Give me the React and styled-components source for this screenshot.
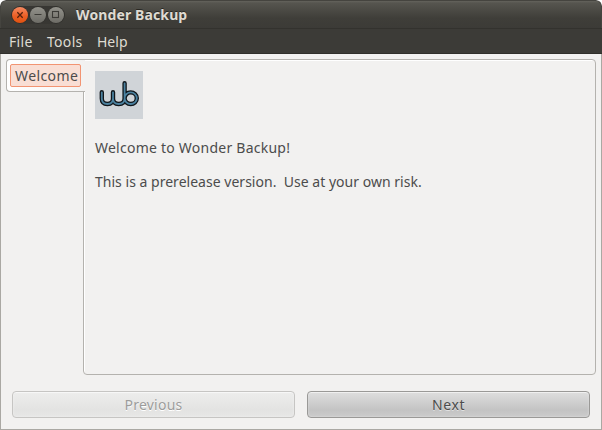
import React from "react";
import styled, { createGlobalStyle } from "styled-components";

const Global = createGlobalStyle`
  * { box-sizing: border-box; }
  body { margin: 0; background: #fff; }
`;

const Window = styled.div`
  width: 602px;
  height: 430px;
  display: flex;
  flex-direction: column;
  overflow: hidden;
  border-radius: 6px 6px 0 0;
  background: #f2f1f0;
  font-family: "Noto Sans", "Open Sans", sans-serif;
  font-size: 14px;
  color: #4c4c4c;
`;

const TitleBar = styled.header`
  height: 28px;
  flex: none;
  display: flex;
  align-items: center;
  padding: 0 0 0 10px;
  border: 1px solid #45443f;
  border-bottom: 0;
  border-radius: 6px 6px 0 0;
  background: linear-gradient(#64635c 0, #56554f 2px, #3f3e39 17px, #3c3b37 100%);
`;

const Controls = styled.div`
  display: flex;
  gap: 2px;
  padding: 1px;
  border-radius: 10px;
  background: #383733;
`;

const Control = styled.span`
  width: 16px;
  height: 16px;
  display: flex;
  border-radius: 50%;
  box-shadow: 0 0 0 0.5px #2b2a27;
  background: ${(p) => (p.$close ? "linear-gradient(#f58a62, #ec6027 55%, #e05210)" : "linear-gradient(#93928b, #6d6c66)")};
  svg { display: block; width: 16px; height: 16px; fill: none; stroke: ${(p) => (p.$close ? "#55200d" : "#3c3b37")}; }
`;

const Title = styled.h1`
  margin: 0 0 0 11px;
  font-size: 14px;
  line-height: 20px;
  font-weight: 700;
  letter-spacing: ${(p) => p.$spacing}px;
  color: #dfdbd2;
  text-shadow: 0 -1px 0 #292824;
`;

const MenuBar = styled.nav`
  height: 26px;
  flex: none;
  display: flex;
  padding-left: 9px;
  border-top: 1px solid #33322e;
  border-bottom: 1px solid #302f2b;
  background: #3c3b37;
  color: #dfdbd2;
  line-height: 25px;
`;

const MenuItem = styled.span`
  width: ${(p) => p.$width}px;
  letter-spacing: ${(p) => p.$spacing}px;
`;

const Body = styled.div`
  flex: 1;
  display: flex;
  flex-direction: column;
  padding: 5px 5px 10px;
  border: solid #aaa8a3;
  border-width: 0 1px 1px;
`;

const Notebook = styled.div`
  height: 316px;
  display: flex;
`;

const Tab = styled.div`
  position: relative;
  z-index: 1;
  width: 79px;
  height: 33px;
  flex: none;
  padding: 4px 3px;
  border: 1px solid #b4b2ae;
  border-right: 0;
  border-radius: 4px 0 0 4px;
  background: linear-gradient(90deg, #fff, #f8f7f6 75%, #f2f1f0);
`;

const TabFocus = styled.div`
  width: 71px;
  height: 23px;
  padding-left: 4px;
  border: 1px solid #f29472;
  border-radius: 2px;
  background: #f9ded4;
  line-height: 22px;
  white-space: nowrap;
  letter-spacing: ${(p) => p.$spacing}px;
`;

const Page = styled.main`
  width: 513px;
  margin-left: -2px;
  padding: 11px;
  border: 1px solid #b4b2ae;
  border-radius: 0 4px 4px 4px;
  box-shadow: inset 1px 1px 0 #fff;
`;

const Logo = styled.svg`
  display: block;
  width: 48px;
  height: 48px;
  background: #d0d4d8;
`;

const Message = styled.p`
  margin: ${(p) => p.$top}px 0 0;
  line-height: 20px;
  white-space: pre;
  letter-spacing: ${(p) => p.$spacing}px;
`;

const Actions = styled.footer`
  display: flex;
  gap: 12px;
  margin: 16px 6px 0 6px;
`;

const Button = styled.button`
  flex: 1;
  height: 27px;
  padding: 0;
  font: inherit;
  line-height: 25px;
  letter-spacing: ${(p) => p.$spacing}px;
  color: #4c4c4c;
  text-shadow: 0 1px 0 #e2e2e2;
  border: 1px solid #9a9997;
  border-radius: 4px;
  background: linear-gradient(#dedede, #c3c3c3 72%, #cbcbcb);
  box-shadow: inset 0 1px 0 #f0f0f0, inset 0 0 2px #e4e4e4;
  &:disabled {
    color: #9c9c9b;
    text-shadow: 0 1px 0 #fff;
    border-color: #c6c5c3;
    background: linear-gradient(#ededec, #e3e3e2 72%, #e7e7e6);
    box-shadow: inset 0 1px 0 #f7f7f7, inset 0 0 2px #f2f2f2;
  }
`;

const LETTERS = "M6.8 21.3V27.6Q6.8 33 12.4 33Q18 33 18 27.6V21.3M18 27.6Q18 33 23.7 33Q29.6 33 29.6 27.6V12.3M29.6 27.2A6.1 5.8 0 1 1 41.8 27.2A6.1 5.8 0 1 1 29.6 27.2";

export default function App() {
  return (
    <Window>
      <Global />
      <TitleBar>
        <Controls>
          <Control $close><svg viewBox="0 0 16 16"><path d="M5.3 5.3l5.4 5.4M10.7 5.3l-5.4 5.4" strokeWidth="1.3" /></svg></Control>
          <Control><svg viewBox="0 0 16 16"><path d="M4.5 7.5h7" /></svg></Control>
          <Control><svg viewBox="0 0 16 16"><rect x="4.5" y="4.5" width="6" height="6" strokeWidth="1.1" /></svg></Control>
        </Controls>
        <Title $spacing={0.12}>Wonder Backup</Title>
      </TitleBar>
      <MenuBar>
        <MenuItem $width={38} $spacing={0.3}>File</MenuItem>
        <MenuItem $width={50} $spacing={0.3}>Tools</MenuItem>
        <MenuItem $width={40} $spacing={0}>Help</MenuItem>
      </MenuBar>
      <Body>
        <Notebook>
          <Tab><TabFocus $spacing={0.4}>Welcome</TabFocus></Tab>
          <Page>
            <Logo viewBox="0 0 48 48" fill="none" strokeLinecap="round" strokeLinejoin="round">
              <path d={LETTERS} stroke="#10161b" strokeWidth="4.4" />
              <path d={LETTERS} stroke="#4b819f" strokeWidth="1.8" />
            </Logo>
            <Message $top={19} $spacing={0.24}>Welcome to Wonder Backup!</Message>
            <Message $top={14} $spacing={0.02}>{"This is a prerelease version.  Use at your own risk."}</Message>
          </Page>
        </Notebook>
        <Actions>
          <Button disabled $spacing={0.25}>Previous</Button>
          <Button $spacing={0.6}>Next</Button>
        </Actions>
      </Body>
    </Window>
  );
}
